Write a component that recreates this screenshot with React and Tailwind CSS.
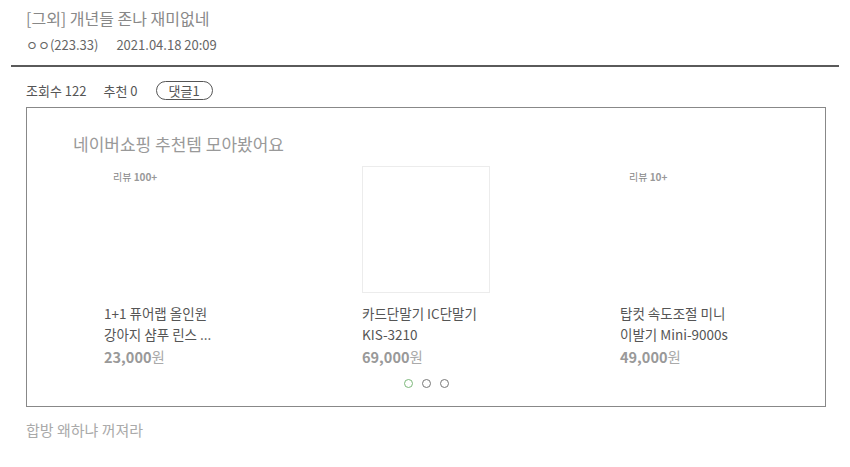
import React from "react";

const products = [
  { review: "100+", name: ["1+1 퓨어랩 올인원", "강아지 샴푸 린스 ..."], price: "23,000", frame: false },
  { review: null, name: ["카드단말기 IC단말기", "KIS-3210"], price: "69,000", frame: true },
  { review: "10+", name: ["탑컷 속도조절 미니", "이발기 Mini-9000s"], price: "49,000", frame: false },
];

const ProductCard = ({ item }) => (
  <div className="w-[128px] shrink-0">
    <div
      className={`relative h-[127px] w-[128px] ${item.frame ? "border border-[#ececec]" : ""}`}
    >
      {item.review && (
        <span className="absolute left-[9px] top-[3px] text-[10px] text-[#888]">
          리뷰 <b className="font-bold text-[#999]">{item.review}</b>
        </span>
      )}
    </div>
    <div className="mt-[10px] whitespace-nowrap text-[13.5px] leading-[21px] text-[#555]">
      {item.name.map((line) => (
        <div key={line}>{line}</div>
      ))}
    </div>
    <div className="mt-px text-[14.5px] leading-[21px] text-[#999]">
      <span className="font-bold">{item.price}</span>
      <span className="text-[#aaa]">원</span>
    </div>
  </div>
);

const App = () => {
  return (
    <div
      className="h-[467px] w-[850px] overflow-hidden bg-white"
      style={{ fontFamily: '"Noto Sans CJK KR", "Noto Sans", sans-serif' }}
    >
      <div className="px-[26px] pt-[6px]">
        <h1 className="text-[16px] leading-[24px] text-[#888]">[그외] 개년들 존나 재미없네</h1>
        <div className="mt-[6px] flex text-[13px] leading-[18px] text-[#666]">
          <span>ㅇㅇ(223.33)</span>
          <span className="ml-[18px]">2021.04.18 20:09</span>
        </div>
      </div>

      <div className="mx-[11px] mt-[11px] h-[2px] bg-[#5a5a5a]" />

      <div className="mt-[14px] flex items-center px-[26px] text-[13px] leading-[18px] text-[#555]">
        <span>조회수 122</span>
        <span className="ml-[17px]">추천 0</span>
        <span className="ml-[18px] rounded-full border border-[#555] px-[12px] leading-[17px]">댓글1</span>
      </div>

      <div className="ml-[26px] mt-[7px] h-[300px] w-[800px] border border-[#888]">
        <div className="pl-[46px] pt-[24px] text-[17px] leading-[24px] text-[#999]">
          네이버쇼핑 추천템 모아봤어요
        </div>
        <div className="mt-[10px] flex gap-[130px] pl-[77px]">
          {products.map((item) => (
            <ProductCard key={item.price} item={item} />
          ))}
        </div>
        <div className="mt-[12px] flex justify-center gap-[9px]">
          <span className="h-[9px] w-[9px] rounded-full border-[1.5px] border-[#7cb87a]" />
          <span className="h-[9px] w-[9px] rounded-full border-[1.5px] border-[#777]" />
          <span className="h-[9px] w-[9px] rounded-full border-[1.5px] border-[#777]" />
        </div>
      </div>

      <div className="mt-[13px] px-[26px] text-[15px] leading-[20px] text-[#aaa]">합방 왜하냐 꺼져라</div>
    </div>
  );
};

export default App;
